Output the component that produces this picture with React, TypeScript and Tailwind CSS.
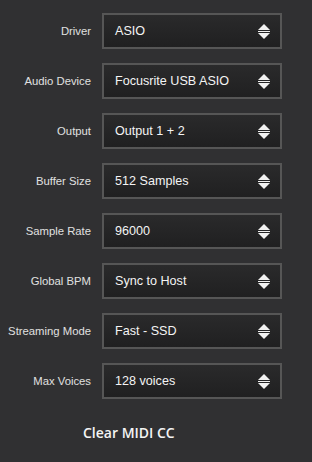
import React from "react";

const rows: [string, string][] = [
  ["Driver", "ASIO"],
  ["Audio Device", "Focusrite USB ASIO"],
  ["Output", "Output 1 + 2"],
  ["Buffer Size", "512 Samples"],
  ["Sample Rate", "96000"],
  ["Global BPM", "Sync to Host"],
  ["Streaming Mode", "Fast - SSD"],
  ["Max Voices", "128 voices"],
];

function Arrows() {
  return (
    <svg width="12" height="15" viewBox="0 0 12 15" className="shrink-0">
      <polygon points="6,0 12,6 0,6" fill="#f2f2f2" />
      <rect x="0" y="7" width="12" height="1" fill="#f2f2f2" />
      <polygon points="0,9 12,9 6,15" fill="#f2f2f2" />
    </svg>
  );
}

export default function App() {
  return (
    <div className="w-[312px] h-[462px] bg-[#303032] flex flex-col pt-[13px]">
      <div className="flex flex-col gap-[14px]">
        {rows.map(([label, value]) => (
          <div key={label} className="flex items-center">
            <div
              className="w-[91px] text-right text-[11.3px] text-[#e0e0e0]"
              style={{ fontFamily: '"Liberation Sans", Arial, sans-serif' }}
            >
              {label}
            </div>
            <div className="ml-[11px] w-[180px] h-[36px] border-2 border-[#565656] bg-gradient-to-b from-[#2a2a2b] to-[#202021] flex items-center pl-[11px] pr-[10px]">
              <span
                className="flex-1 text-[12.6px] text-[#f4f4f4]"
                style={{ fontFamily: '"Liberation Sans", Arial, sans-serif' }}
              >
                {value}
              </span>
              <Arrows />
            </div>
          </div>
        ))}
      </div>
      <div
        className="mt-[23px] pl-[83px] text-[14px] font-semibold text-[#f4f4f4]"
        style={{ fontFamily: '"Open Sans", sans-serif' }}
      >
        Clear MIDI CC
      </div>
    </div>
  );
}
